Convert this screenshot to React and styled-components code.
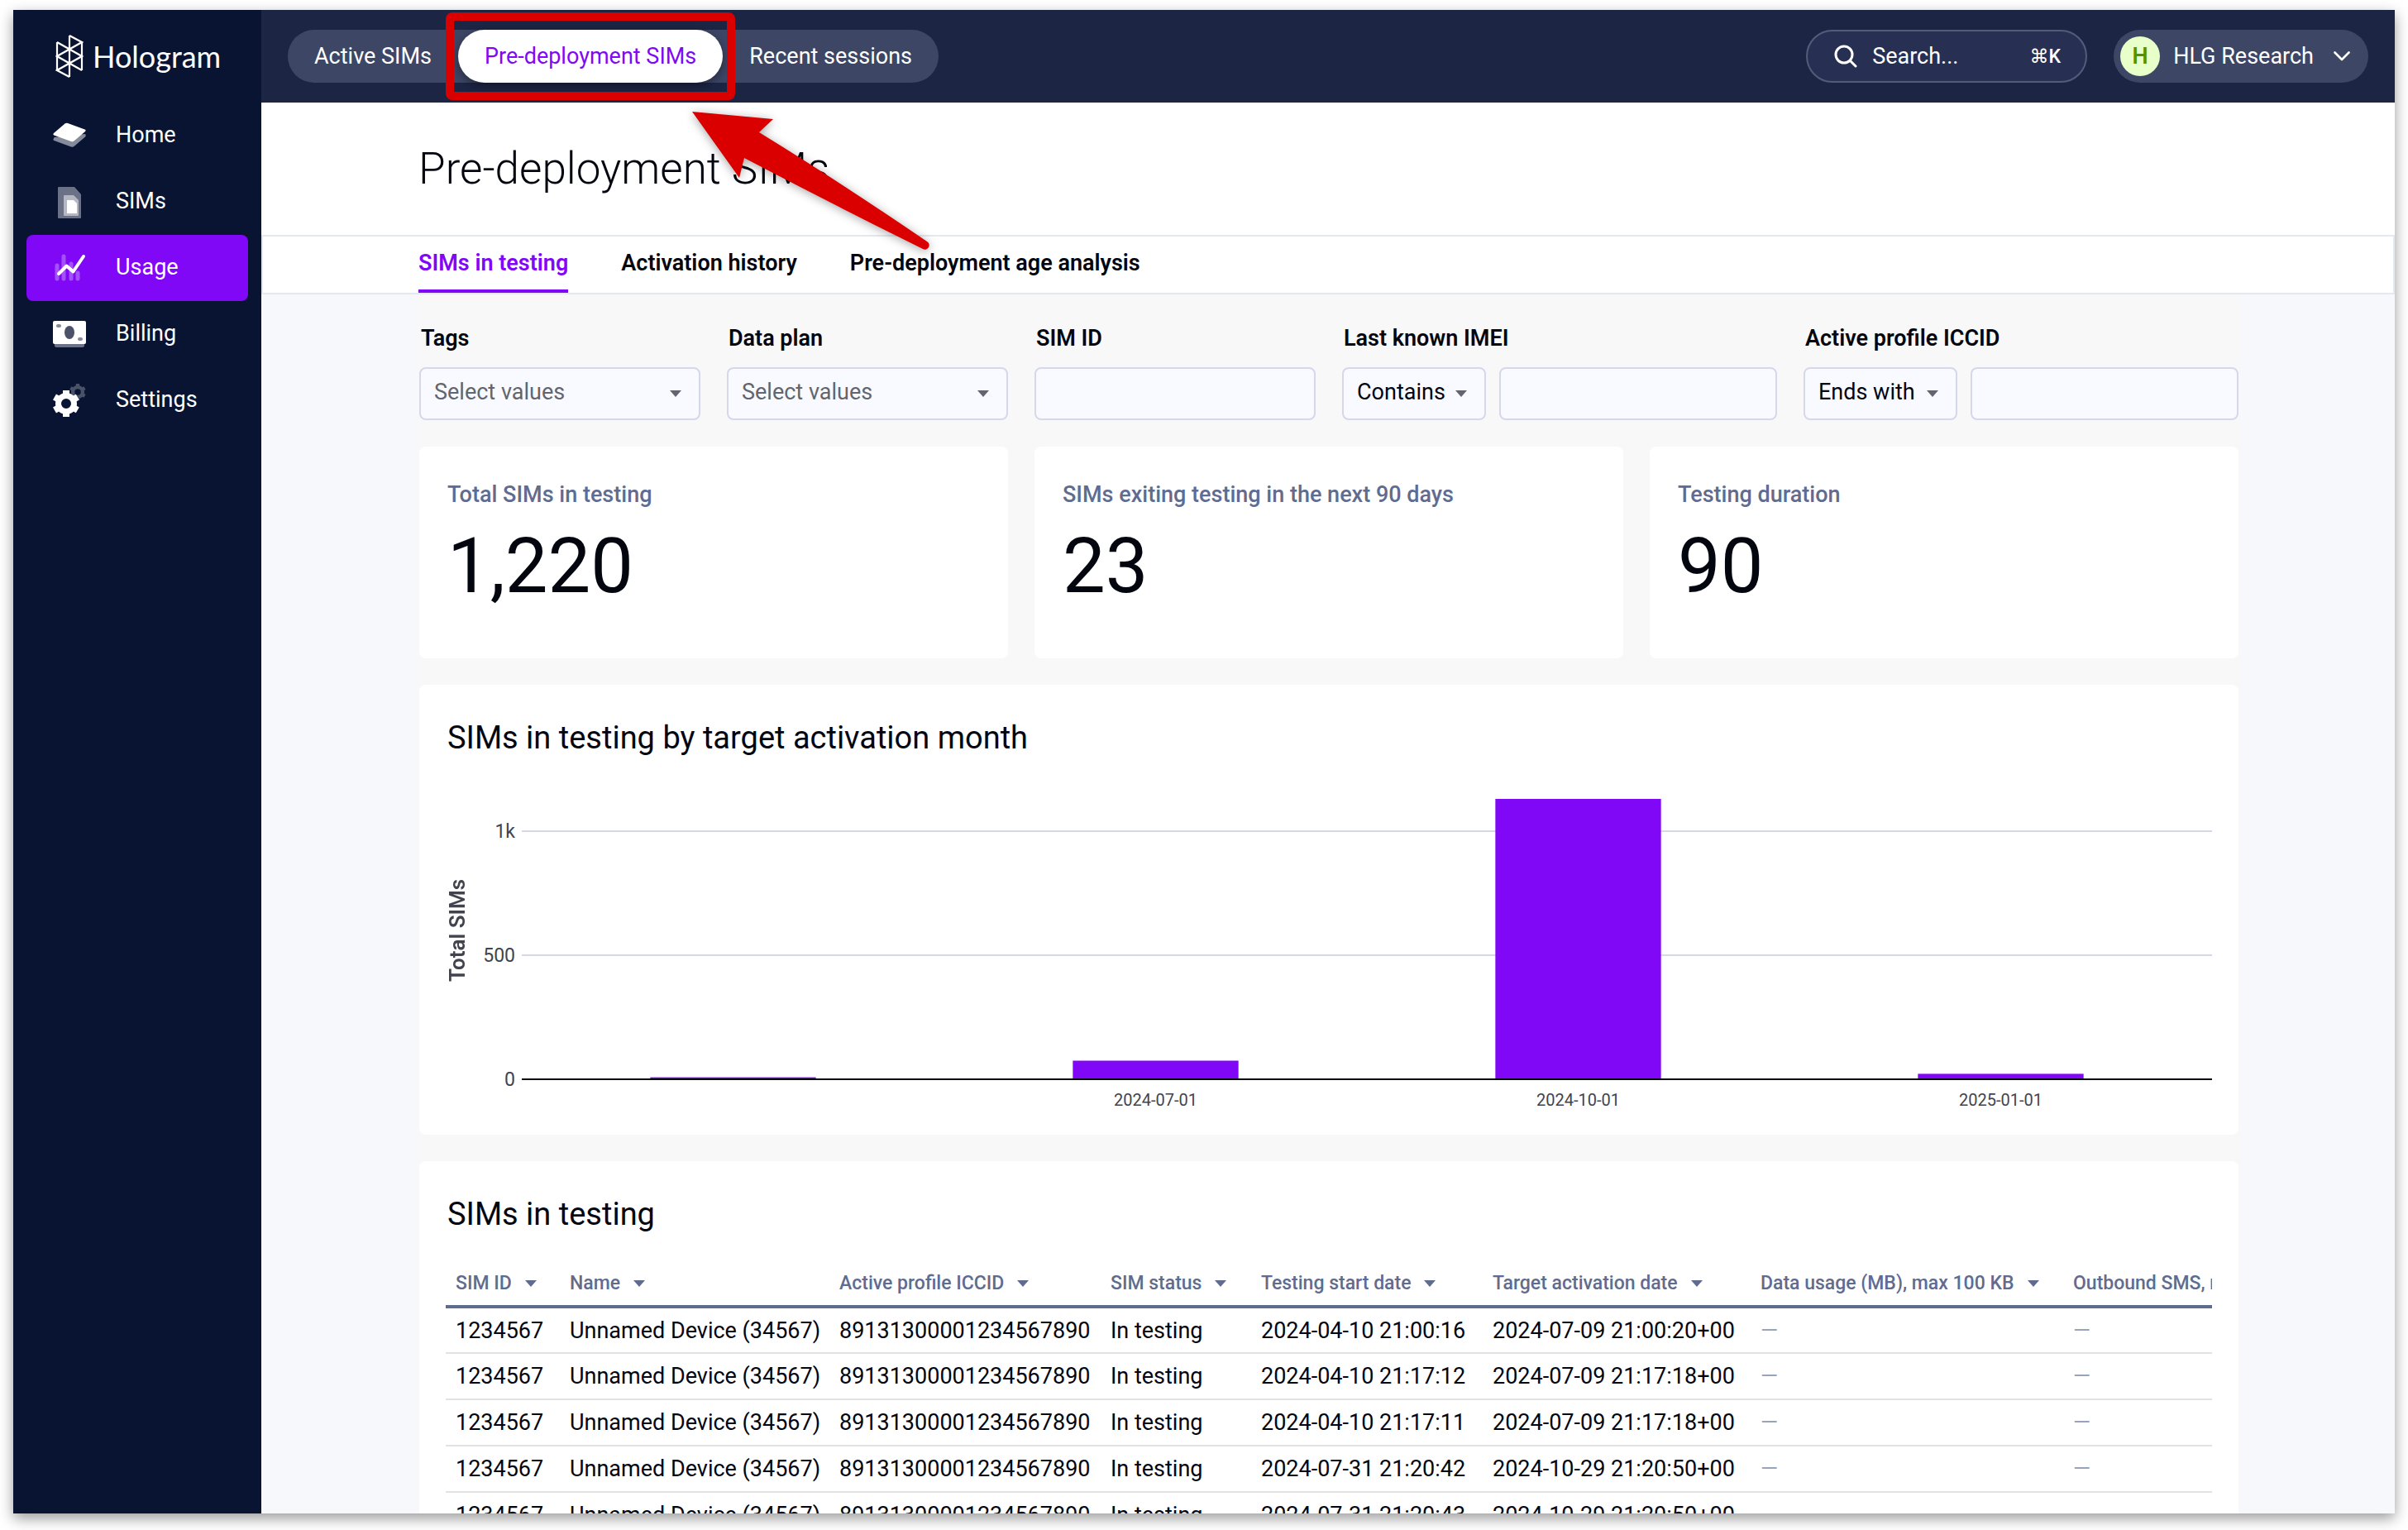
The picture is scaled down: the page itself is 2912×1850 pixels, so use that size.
import React from 'react'
import styled, { createGlobalStyle } from 'styled-components'

const NAV_ITEMS = [
  { label: 'Home', icon: HomeIcon },
  { label: 'SIMs', icon: SimIcon },
  { label: 'Usage', icon: UsageIcon, active: true },
  { label: 'Billing', icon: BillingIcon },
  { label: 'Settings', icon: SettingsIcon },
]

const TABS = ['SIMs in testing', 'Activation history', 'Pre-deployment age analysis']

const STATS = [
  { label: 'Total SIMs in testing', value: '1,220' },
  { label: 'SIMs exiting testing in the next 90 days', value: '23' },
  { label: 'Testing duration', value: '90' },
]

const MONTHS = [
  { label: '', total: 8 },
  { label: '2024-07-01', total: 75 },
  { label: '2024-10-01', total: 1130 },
  { label: '2025-01-01', total: 22 },
]

const Y_TICKS = [
  { label: '1k', value: 1000 },
  { label: '500', value: 500 },
  { label: '0', value: 0 },
]

const COLUMNS = [
  { label: 'SIM ID', width: 138 },
  { label: 'Name', width: 326 },
  { label: 'Active profile ICCID', width: 328 },
  { label: 'SIM status', width: 182 },
  { label: 'Testing start date', width: 280 },
  { label: 'Target activation date', width: 324 },
  { label: 'Data usage (MB), max 100 KB', width: 378 },
  { label: 'Outbound SMS, max 10', width: 330 },
]

const ROWS = [
  ['2024-04-10 21:00:16', '2024-07-09 21:00:20+00'],
  ['2024-04-10 21:17:12', '2024-07-09 21:17:18+00'],
  ['2024-04-10 21:17:11', '2024-07-09 21:17:18+00'],
  ['2024-07-31 21:20:42', '2024-10-29 21:20:50+00'],
  ['2024-07-31 21:20:43', '2024-10-29 21:20:50+00'],
].map(([start, target]) => [
  '1234567', 'Unnamed Device (34567)', '89131300001234567890', 'In testing', start, target, '—', '—',
])

export default function App() {
  return (
    <>
      <GlobalStyle />
      <Window>
        <Sidebar />
        <Main>
          <TopBar />
          <TitleBar>
            <h1>Pre-deployment SIMs</h1>
          </TitleBar>
          <TabBar>
            {TABS.map((tab, i) => (
              <Tab key={tab} href="#" $active={i === 0}>{tab}</Tab>
            ))}
          </TabBar>
          <Content>
            <Dashboard>
              <Filters />
              {STATS.map((stat) => (
                <StatCard key={stat.label}>
                  <h3>{stat.label}</h3>
                  <p>{stat.value}</p>
                </StatCard>
              ))}
              <ChartCard>
                <CardTitle>SIMs in testing by target activation month</CardTitle>
                <BarChart />
              </ChartCard>
              <TableCard>
                <CardTitle>SIMs in testing</CardTitle>
                <SimTable />
              </TableCard>
            </Dashboard>
          </Content>
        </Main>
      </Window>
    </>
  )
}

function Sidebar() {
  return (
    <SidebarContainer>
      <Brand href="#">
        <LogoIcon />
        <span>Hologram</span>
      </Brand>
      {NAV_ITEMS.map(({ label, icon: Icon, active }) => (
        <NavLink key={label} href="#" $active={active}>
          <Icon />
          <span>{label}</span>
        </NavLink>
      ))}
    </SidebarContainer>
  )
}

function TopBar() {
  return (
    <Header>
      <Segments>
        <Segment>Active SIMs</Segment>
        <Segment $active>
          Pre-deployment SIMs
          <Highlight />
          <Arrow />
        </Segment>
        <Segment>Recent sessions</Segment>
      </Segments>
      <SearchBox>
        <SearchIcon />
        <input type="text" placeholder="Search..." aria-label="Search" />
        <kbd>⌘<b>K</b></kbd>
      </SearchBox>
      <AccountButton>
        <Avatar>H</Avatar>
        HLG Research
        <svg width="20" height="12" viewBox="0 0 20 12" fill="none">
          <path d="M1.5 1.5 10 10l8.5-8.5" stroke="#fff" strokeWidth="2.6" strokeLinecap="round" strokeLinejoin="round" />
        </svg>
      </AccountButton>
    </Header>
  )
}

function Filters() {
  return (
    <>
      <Field $span={2}>
        <label htmlFor="tags">Tags</label>
        <SelectBox $muted>
          <select id="tags"><option>Select values</option></select>
          <Caret />
        </SelectBox>
      </Field>
      <Field $span={2}>
        <label htmlFor="plan">Data plan</label>
        <SelectBox $muted>
          <select id="plan"><option>Select values</option></select>
          <Caret />
        </SelectBox>
      </Field>
      <Field $span={2}>
        <label htmlFor="sim">SIM ID</label>
        <TextInput id="sim" />
      </Field>
      <Field $span={3}>
        <label htmlFor="imei">Last known IMEI</label>
        <FieldRow $first={174}>
          <SelectBox>
            <select aria-label="IMEI match"><option>Contains</option></select>
            <Caret />
          </SelectBox>
          <TextInput id="imei" />
        </FieldRow>
      </Field>
      <Field $span={3}>
        <label htmlFor="iccid">Active profile ICCID</label>
        <FieldRow $first={186}>
          <SelectBox>
            <select aria-label="ICCID match"><option>Ends with</option></select>
            <Caret />
          </SelectBox>
          <TextInput id="iccid" />
        </FieldRow>
      </Field>
    </>
  )
}

// 0.3px per SIM, baseline at y = 345
function BarChart() {
  const y = (value) => 345 - value * 0.3
  return (
    <Chart>
      <AxisTitle>Total SIMs</AxisTitle>
      <YAxis width="64" height="390">
        {Y_TICKS.map((tick) => (
          <text key={tick.label} x="56" y={y(tick.value) + 8} textAnchor="end">{tick.label}</text>
        ))}
      </YAxis>
      <Plot height="390">
        {Y_TICKS.slice(0, 2).map((tick) => (
          <rect key={tick.label} x="0" y={y(tick.value) - 1} width="100%" height="2" fill="#d5d7eb" />
        ))}
        {MONTHS.map((month, i) => (
          <React.Fragment key={i}>
            <rect x={`${i * 25 + 7.6}%`} y={y(month.total)} width="9.8%" height={month.total * 0.3} fill="#8008f7" />
            <text x={`${i * 25 + 12.5}%`} y="377" textAnchor="middle">{month.label}</text>
          </React.Fragment>
        ))}
        <rect x="0" y="344" width="100%" height="2" fill="#03060f" />
      </Plot>
    </Chart>
  )
}

function SimTable() {
  return (
    <TableScroll>
      <Table>
        <colgroup>
          {COLUMNS.map((col) => <col key={col.label} width={col.width} />)}
        </colgroup>
        <thead>
          <tr>
            {COLUMNS.map((col) => (
              <th key={col.label} scope="col">{col.label}<Caret /></th>
            ))}
          </tr>
        </thead>
        <tbody>
          {ROWS.map((row, r) => (
            <tr key={r}>
              {row.map((cell, c) => (
                <Cell key={c} $empty={cell === '—'}>{cell}</Cell>
              ))}
            </tr>
          ))}
        </tbody>
      </Table>
    </TableScroll>
  )
}

function Caret() {
  return (
    <svg className="caret" width="14" height="8" viewBox="0 0 14 8">
      <path d="M0 0h14L7 8z" fill="currentColor" />
    </svg>
  )
}

function Arrow() {
  return (
    <ArrowSvg width="300" height="180" viewBox="0 0 300 180">
      <path d="M4 4 102 13 85 29Q178 86 288 161A5 5 0 0 1 283 170Q176 117 67 60L61 84Z" fill="#db0000" />
    </ArrowSvg>
  )
}

function LogoIcon() {
  return (
    <svg width="34" height="54" viewBox="0 0 34 54" fill="none" stroke="#fff" strokeWidth="2.2">
      <path d="M17 2v50M2 10v34M32 10v34M17 2l15 8L2 27l30 17M2 10l30 17L2 44l15 8" />
    </svg>
  )
}

function HomeIcon() {
  return (
    <svg width="40" height="40" viewBox="0 -4 40 40">
      <path d="M1.5 18 .5 20.500Q0 21.500 1.500 22L22 29.500Q24 30 25.500 29L39 17.500Q40.500 16 39 14z" fill="#858b9c" />
      <path d="M14.500 1.500Q16 .500 18 1L38.500 8.500Q40.500 9.500 39 11L25.500 22.500Q24 23.700 22 23L1.200 15.500Q-.300 14.500 1 13z" fill="#fff" />
    </svg>
  )
}

function SimIcon() {
  return (
    <svg width="40" height="40" viewBox="0 0 40 40">
      <path d="M7 2h19l8 9v28a1 1 0 0 1-1 1H7a1 1 0 0 1-1-1V3a1 1 0 0 1 1-1z" fill="#6b7186" />
      <path d="M14 12h11l6 6v18a1 1 0 0 1-1 1H14a1 1 0 0 1-1-1V13a1 1 0 0 1 1-1z" fill="#b5b8c3" />
      <path d="M17 18h8l4 4v12H17z" fill="#fff" />
    </svg>
  )
}

function UsageIcon() {
  return (
    <svg width="40" height="40" viewBox="0 0 40 40" fill="none" strokeLinecap="round" strokeLinejoin="round">
      <path d="M5 17v16M13 6v27M22 15v18M30 26v7" stroke="#a352fa" strokeWidth="5" />
      <path d="M7 27l9.500-9.500 8 7L37 6" stroke="#fff" strokeWidth="4" />
    </svg>
  )
}

function BillingIcon() {
  return (
    <svg width="40" height="40" viewBox="0 0 40 40">
      <rect x="2" y="20" width="36" height="16" rx="2" fill="#6b7186" />
      <rect y="4" width="40" height="28" rx="2" fill="#fff" />
      <ellipse cx="20" cy="18" rx="6" ry="8" fill="#4a5169" />
      <rect x="4" y="8" width="6" height="4" rx="2" fill="#858b9c" />
      <rect x="30" y="24" width="6" height="4" rx="2" fill="#858b9c" />
    </svg>
  )
}

function SettingsIcon() {
  return (
    <svg width="40" height="40" viewBox="0 0 40 40">
      <g transform="translate(30 10) scale(.62)" fill="none" stroke="#4a5169">
        <circle r="9.500" strokeWidth="7" />
        <path d="M0-16v32M-14-8l28 16M-14 8l28-16" strokeWidth="7" strokeDasharray="5 22" />
      </g>
      <g transform="translate(16 24)" fill="none" stroke="#fff">
        <circle r="9.500" strokeWidth="7" />
        <path d="M0-16v32M-14-8l28 16M-14 8l28-16" strokeWidth="8" strokeDasharray="5 22" />
      </g>
    </svg>
  )
}

function SearchIcon() {
  return (
    <svg width="28" height="28" viewBox="0 0 28 28" fill="none" stroke="#fff" strokeWidth="3" strokeLinecap="round">
      <circle cx="12" cy="12" r="10" />
      <path d="M19.500 19.500 26 26" />
    </svg>
  )
}

const GlobalStyle = createGlobalStyle`
  * {
    box-sizing: border-box;
  }
  body {
    margin: 0;
    background: #fff;
    color: #03060f;
    font-family: Roboto, "Liberation Sans", sans-serif;
    font-size: 27px;
  }
  h1, h2, h3, p {
    margin: 0;
  }
  a {
    text-decoration: none;
  }
  button, input, select {
    font: inherit;
    color: inherit;
  }
`

const Window = styled.div`
  display: flex;
  height: calc(100vh - 32px);
  margin: 12px 16px 20px;
  overflow: hidden;
  box-shadow: 0 6px 16px rgba(0, 0, 0, 0.4);
`

const SidebarContainer = styled.nav`
  flex: 0 0 300px;
  padding: 0 16px;
  background: #091433;
`

const Brand = styled.a`
  display: flex;
  align-items: center;
  gap: 11px;
  height: 112px;
  padding-left: 35px;
  color: #fff;
  font-family: Lato, sans-serif;
  font-size: 36px;
`

const NavLink = styled.a`
  display: flex;
  align-items: center;
  gap: 36px;
  height: 80px;
  padding-left: 32px;
  border-radius: 8px;
  background: ${(props) => (props.$active ? '#8008f7' : 'transparent')};
  color: #fff;
  span {
    padding-bottom: 2px;
  }
`

const Main = styled.main`
  display: flex;
  flex-direction: column;
  flex: 1;
  min-width: 0;
`

const Header = styled.header`
  display: flex;
  flex-shrink: 0;
  align-items: center;
  gap: 32px;
  height: 112px;
  padding: 0 32px;
  background: #1d2545;
  color: #fff;
`

const Segments = styled.div`
  display: flex;
  margin-right: auto;
  border-radius: 32px;
  background: #3d4665;
`

const Segment = styled.button`
  position: relative;
  height: 64px;
  padding: 0 32px;
  border: 0;
  border-radius: 32px;
  background: ${(props) => (props.$active ? '#fff' : 'transparent')};
  box-shadow: ${(props) => (props.$active ? '0 4px 12px rgba(0, 0, 0, 0.4)' : 'none')};
  color: ${(props) => (props.$active ? '#8008f7' : '#fff')};
`

const Highlight = styled.span`
  position: absolute;
  inset: -21px -15px;
  border: 10px solid #db0000;
  border-radius: 8px;
`

const ArrowSvg = styled.svg`
  position: absolute;
  z-index: 2;
  top: 95px;
  left: 279px;
  filter: drop-shadow(0 2px 6px rgba(0, 0, 0, 0.35));
`

const SearchBox = styled.div`
  display: flex;
  align-items: center;
  gap: 18px;
  width: 340px;
  height: 64px;
  padding: 0 30px 0 32px;
  border: 2px solid #535c79;
  border-radius: 32px;
  background: #273053;
  svg {
    flex-shrink: 0;
  }
  input {
    flex: 1;
    min-width: 0;
    padding: 0;
    border: 0;
    background: none;
    outline: none;
  }
  input::placeholder {
    color: #fff;
  }
  kbd {
    font-family: Roboto, "DejaVu Sans", sans-serif;
    font-size: 23px;
  }
  b {
    font-weight: 500;
  }
`

const AccountButton = styled.button`
  display: flex;
  align-items: center;
  gap: 16px;
  height: 64px;
  padding: 0 22px 0 8px;
  border: 0;
  border-radius: 32px;
  background: #3d4665;
  svg {
    margin-left: 8px;
  }
`

const Avatar = styled.span`
  display: grid;
  place-items: center;
  width: 48px;
  height: 48px;
  border-radius: 50%;
  background: #e9ffc9;
  color: #4a9600;
  font-weight: 600;
`

const TitleBar = styled.div`
  flex-shrink: 0;
  height: 160px;
  padding: 0 190px;
  background: #fff;
  h1 {
    max-width: 2200px;
    margin: 0 auto;
    font-size: 53px;
    font-weight: 300;
    line-height: 160px;
  }
`

const TabBar = styled.div`
  display: flex;
  flex-shrink: 0;
  gap: 64px;
  height: 72px;
  padding: 0 188px;
  border: 2px solid #e4e8f0;
  background: #fff;
`

const Tab = styled.a`
  border-bottom: 4px solid ${(props) => (props.$active ? '#8008f7' : 'transparent')};
  color: ${(props) => (props.$active ? '#8008f7' : '#03060f')};
  font-weight: 600;
  line-height: 64px;
`

const Content = styled.div`
  flex: 1;
  min-height: 0;
  overflow: hidden;
  background: #f7f8fb;
`

const Dashboard = styled.div`
  display: grid;
  grid-template-columns: repeat(12, 1fr);
  gap: 32px;
  max-width: 2202px;
  margin: 0 auto;
  padding: 34px 0 0 2px;
  background: #f8f8f8;
`

const Field = styled.div`
  grid-column: span ${(props) => props.$span};
  min-width: 0;
  label {
    display: block;
    height: 54px;
    padding-left: 2px;
    font-weight: 600;
    line-height: 38px;
  }
`

const FieldRow = styled.div`
  display: grid;
  grid-template-columns: ${(props) => props.$first}px 1fr;
  gap: 16px;
`

const TextInput = styled.input`
  width: 100%;
  height: 64px;
  padding: 0 16px;
  border: 2px solid #d5d7eb;
  border-radius: 8px;
  background: #f9faff;
`

const SelectBox = styled.div`
  position: relative;
  color: ${(props) => (props.$muted ? '#62656f' : '#03060f')};
  select {
    width: 100%;
    height: 64px;
    padding: 0 16px 4px;
    border: 2px solid #d5d7eb;
    border-radius: 8px;
    background: #f9faff;
    appearance: none;
  }
  .caret {
    position: absolute;
    top: 28px;
    right: 23px;
    color: #62656f;
    pointer-events: none;
  }
`

const Card = styled.section`
  min-width: 0;
  border-radius: 8px;
  background: #fff;
`

const StatCard = styled(Card)`
  grid-column: span 4;
  height: 256px;
  padding: 38px 34px;
  h3 {
    color: #606c8f;
    font-size: 27px;
    font-weight: 500;
    line-height: 40px;
  }
  p {
    font-size: 92px;
    line-height: 134px;
  }
`

const CardTitle = styled.h2`
  padding-left: 2px;
  font-size: 38px;
  font-weight: 400;
  line-height: 60px;
`

const ChartCard = styled(Card)`
  grid-column: 1 / -1;
  height: 544px;
  padding: 34px 32px 32px;
`

const TableCard = styled(Card)`
  grid-column: 1 / -1;
  padding: 34px 32px 32px;
`

const Chart = styled.div`
  display: flex;
  margin-top: 38px;
  fill: #41444f;
`

const AxisTitle = styled.div`
  width: 28px;
  height: 330px;
  color: #41444f;
  font-size: 26px;
  font-weight: 600;
  line-height: 28px;
  text-align: center;
  writing-mode: vertical-rl;
  transform: rotate(180deg);
`

const YAxis = styled.svg`
  flex-shrink: 0;
  font-size: 23px;
`

const Plot = styled.svg`
  flex: 1;
  min-width: 0;
  font-size: 20px;
`

const TableScroll = styled.div`
  overflow: hidden;
`

const Table = styled.table`
  width: 2286px;
  border-collapse: collapse;
  table-layout: fixed;
  white-space: nowrap;
  th {
    height: 82px;
    padding: 26px 0 0 12px;
    border-bottom: 4px solid #606c8f;
    color: #606c8f;
    font-size: 23px;
    font-weight: 500;
    text-align: left;
  }
  .caret {
    margin: 0 0 3px 16px;
  }
`

const Cell = styled.td`
  height: 56px;
  padding: 0 0 0 12px;
  border-bottom: 2px solid #e0e2e6;
  color: ${(props) => (props.$empty ? '#9aa3ba' : 'inherit')};
`
